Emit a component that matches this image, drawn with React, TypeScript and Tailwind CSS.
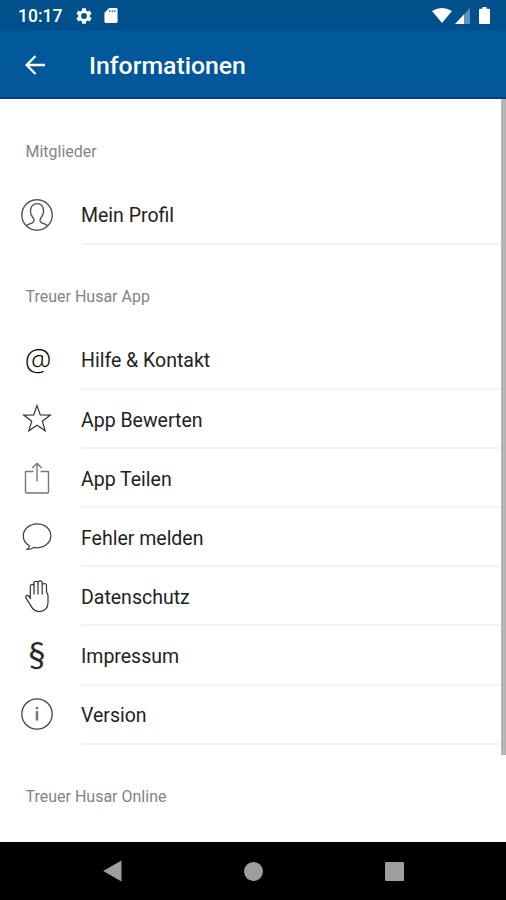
import React from 'react';

type Item = { label: string; icon: React.ReactNode };

const ProfileIcon = () => (
  <svg className="h-8 w-8" viewBox="0 0 32 32" fill="none" stroke="#555" strokeWidth="1.4">
    <circle cx="16" cy="16" r="15.2" />
    <path d="M5.5 26.6c1.800-1.500 4.600-2 6.200-3 1.800-1.100 1.500-3 .6-4.300-1.300-1.700-2.900-3.600-2.900-6.800C9.400 7.300 12 4.600 16 4.600s6.600 2.700 6.600 7.900c0 3.200-1.600 5.100-2.900 6.800-.9 1.300-1.200 3.200.6 4.300 1.600 1 4.400 1.500 6.200 3" />
  </svg>
);

const StarIcon = () => (
  <svg className="h-8 w-8" viewBox="0 0 32 32" fill="none" stroke="#333" strokeWidth="1.2">
    <path d="M16 2.600l3.300 9.400 10 .1-8 6.100 2.900 9.600L16 22.300 7.800 27.800l2.900-9.600-8-6.100 10-.1z" />
  </svg>
);

const ShareIcon = () => (
  <svg className="h-8 w-8" viewBox="0 0 32 32" fill="none" stroke="#777" strokeWidth="1.4" strokeLinejoin="round">
    <path d="M12.500 9.500h-8v20.500q0 1 1 1h21q1 0 1-1V9.500h-8M16 19.500V1.500M11.300 6L16 1.300 20.700 6" />
  </svg>
);

const ChatIcon = () => (
  <svg className="h-8 w-8" viewBox="0 0 32 32" fill="none" stroke="#444" strokeWidth="1.3">
    <path d="M16.200 2.800C8.600 2.800 2.300 8.200 2.300 14.900c0 4.200 2.400 7.700 6 9.900.2 1.700-.5 2.600-2 3.600 2.300.1 4.500-.5 6.300-2 1.100.3 2.200.4 3.400.4 7.600 0 13.800-5.200 13.800-11.900S23.800 2.800 16.200 2.800z" />
  </svg>
);

const HandIcon = () => (
  <svg className="h-8 w-8" viewBox="0 0 32 32" fill="none" stroke="#333" strokeWidth="1.2" strokeLinejoin="round">
    <path d="M9.300 18.500V6.300c0-2.500 3.700-2.500 3.700 0V3.200c0-2.600 4-2.600 4 0v-.4c0-2.600 4.200-2.600 4.200 0v2.500c0-2.500 4.300-2.400 4.300.4v6.500c1 1.300 1.500 2.400 1.500 4v6.500c0 5.500-3.500 8.800-8.700 8.800-4.500 0-6.600-2.200-8.400-5.600l-5-8c-1-2.600 1.700-3.200 3.200-1.500z" />
    <path d="M13 6.300V14.500M17 3.200V14.500M21.200 5.300V14.500" />
  </svg>
);

const InfoIcon = () => (
  <svg className="h-8 w-8" viewBox="0 0 32 32" fill="none" stroke="#444" strokeWidth="1.3">
    <circle cx="16" cy="16" r="15.2" />
    <path d="M16 13V22.500M16 9v2.200" stroke="#777" strokeWidth="2.500" />
  </svg>
);

const MEMBER_ITEMS: Item[] = [{ label: 'Mein Profil', icon: <ProfileIcon /> }];

const APP_ITEMS: Item[] = [
  {
    label: 'Hilfe & Kontakt',
    icon: <span className="pl-0.5 pb-0.5 font-['Open_Sans'] text-[30px] leading-[30px] font-light text-black">@</span>,
  },
  { label: 'App Bewerten', icon: <StarIcon /> },
  { label: 'App Teilen', icon: <ShareIcon /> },
  { label: 'Fehler melden', icon: <ChatIcon /> },
  { label: 'Datenschutz', icon: <HandIcon /> },
  { label: 'Impressum', icon: <span className="pb-1 font-[Lato] text-[35px] leading-[30px]">§</span> },
  { label: 'Version', icon: <InfoIcon /> },
];

const SectionTitle = ({ children }: { children: React.ReactNode }) => (
  <h2 className="h-[86px] shrink-0 pt-[40px] pl-[25.5px] text-[16px] leading-6 text-[#848484]">{children}</h2>
);

const ItemList = ({ items }: { items: Item[] }) => (
  <ul className="shrink-0">
    {items.map(({ label, icon }) => (
      <li key={label} className="flex h-[59.08px]">
        <div className="flex w-[81px] items-center pb-0.5 pl-[21px]">
          <span className="flex w-8 justify-center text-[#2b2b2b]">{icon}</span>
        </div>
        <div className="flex flex-1 items-center border-b-2 border-[#f3f3f3] pt-[3px] text-[19.5px] text-[#222]">{label}</div>
      </li>
    ))}
  </ul>
);

const App: React.FC = () => {
  return (
    <div className="flex h-[900px] w-[506px] flex-col overflow-hidden bg-white font-[Roboto,sans-serif]">
      {/* Status bar */}
      <div className="flex h-[30px] shrink-0 items-center bg-[#00508b] pt-px pr-[16px] pl-[18px] text-white">
        <span className="w-[58px] pt-px text-[17.5px] font-medium">10:17</span>
        <svg className="h-4 w-4" viewBox="2 2 20 20" fill="currentColor">
          <path d="M19.140 12.940c.04-.3.060-.61.060-.94 0-.32-.02-.64-.07-.94l2.030-1.580a.49.49 0 0 0 .12-.61l-1.920-3.320a.488.488 0 0 0-.59-.22l-2.390.96c-.5-.38-1.030-.7-1.620-.94l-.36-2.540a.484.484 0 0 0-.48-.41h-3.840c-.24 0-.43.17-.47.41l-.36 2.540c-.59.24-1.130.57-1.620.94l-2.390-.96c-.22-.08-.47 0-.59.22L2.740 8.870c-.12.21-.08.47.12.61l2.030 1.580c-.05.3-.09.63-.09.94s.02.64.07.94l-2.030 1.580a.49.49 0 0 0-.12.61l1.920 3.320c.12.22.37.29.59.22l2.390-.96c.5.38 1.030.7 1.620.94l.36 2.540c.05.24.24.41.48.41h3.840c.24 0 .44-.17.47-.41l.36-2.540c.59-.24 1.130-.56 1.620-.94l2.390.96c.22.08.47 0 .59-.22l1.920-3.320c.12-.22.070-.47-.12-.61l-2.010-1.580zM12 15.600A3.600 3.600 0 1 1 12 8.400a3.600 3.600 0 0 1 0 7.200z" />
        </svg>
        <svg className="ml-3 h-[15px] w-[14px]" viewBox="0 0 14 16" fill="currentColor">
          <path fillRule="evenodd" d="M5 0h7.500Q14 0 14 1.500v13Q14 16 12.500 16h-11Q0 16 0 14.500V5zM5 2.300v2h1.200v-2zM7.700 2.300v2h1.200v-2zM10.400 2.300v2h1.200v-2z" />
        </svg>
        <svg className="mr-[3px] ml-auto h-[15px] w-5" viewBox="0 0 20 15" fill="currentColor">
          <path d="M0 3Q10-3 20 3L10 15z" />
        </svg>
        <svg className="h-4 w-[15px]" viewBox="0 0 15 16">
          <path d="M15 0v16H0z" fill="#5f93bb" />
          <path d="M9 6.400V16H0z" fill="white" />
        </svg>
        <svg className="ml-[9px] h-[17px] w-[11px]" viewBox="0 0 11 17" fill="currentColor">
          <path d="M3.500 0h4v1.800H10q1 0 1 1V16q0 1-1 1H1q-1 0-1-1V2.800q0-1 1-1h2.500z" />
        </svg>
      </div>

      {/* App bar */}
      <header className="flex h-[69px] shrink-0 items-center border-b-2 border-[#063c8b] bg-[#005799] pt-0.5 pl-[25px] text-white">
        <svg className="h-5 w-5" viewBox="0 0 20 20" fill="none" stroke="currentColor" strokeWidth="2.3">
          <path d="M20 10H2M10.500 1L1.600 10l8.900 9" />
        </svg>
        <h1 className="ml-11 pt-0.5 text-[24.8px] font-medium">Informationen</h1>
      </header>

      <main className="relative flex h-[743px] shrink-0 flex-col overflow-hidden pt-px">
        <SectionTitle>Mitglieder</SectionTitle>
        <ItemList items={MEMBER_ITEMS} />
        <SectionTitle>Treuer Husar App</SectionTitle>
        <ItemList items={APP_ITEMS} />
        <SectionTitle>Treuer Husar Online</SectionTitle>
        {/* Scrollbar thumb */}
        <div className="absolute top-0 right-0 h-[656px] w-[5px] bg-[#b5b5b5]" />
      </main>

      {/* System navigation */}
      <nav className="flex h-[58px] shrink-0 items-center justify-between bg-black px-[102.5px] text-[#9e9e9e]">
        <svg className="h-[22px] w-5" viewBox="0 0 20 22" fill="currentColor">
          <path d="M18.500.5v21L.2 11z" />
        </svg>
        <span className="h-[19px] w-[19px] rounded-full bg-current" />
        <span className="h-[19px] w-[19px] rounded-[1px] bg-current" />
      </nav>
    </div>
  );
};

export default App;
